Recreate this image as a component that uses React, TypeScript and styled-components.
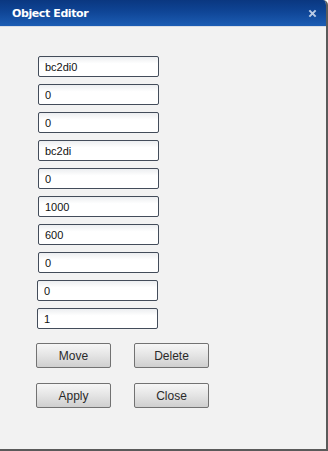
import React from "react";
import styled, { createGlobalStyle } from "styled-components";

const GlobalStyle = createGlobalStyle`
  html, body {
    margin: 0;
    padding: 0;
    background: #ffffff;
  }
  * {
    box-sizing: border-box;
  }
`;

const fields = ["bc2di0", "0", "0", "bc2di", "0", "1000", "600", "0", "0", "1"];

export default function App() {
  return (
    <>
      <GlobalStyle />
      <Window>
        <TitleBar>
          <Title>Object Editor</Title>
          <CloseIcon viewBox="0 0 10 10" aria-hidden>
            <path d="M1.5 1.5 L8.5 8.5 M8.5 1.5 L1.5 8.5" />
          </CloseIcon>
        </TitleBar>
        <Body>
          <FieldList>
            {fields.map((value, i) => (
              <Field key={i} defaultValue={value} $shift={i >= 8 ? -1 : 0} />
            ))}
          </FieldList>
          <ButtonGrid>
            <Button>Move</Button>
            <Button>Delete</Button>
            <Button>Apply</Button>
            <Button>Close</Button>
          </ButtonGrid>
        </Body>
      </Window>
    </>
  );
}

const Window = styled.div`
  width: 328px;
  height: 451px;
  display: flex;
  flex-direction: column;
  background: #f2f2f2;
  border-right: 2px solid #5a5a5a;
  border-bottom: 2px solid #5a5a5a;
  border-top-right-radius: 5px;
  overflow: hidden;
  font-family: "Liberation Sans", Arial, sans-serif;
`;

const TitleBar = styled.div`
  height: 27px;
  display: flex;
  align-items: center;
  justify-content: space-between;
  padding: 1px 9px 0 12px;
  background: linear-gradient(to bottom, #0a3780 0%, #0f4596 45%, #1c5db4 100%);
  border-bottom: 1px solid #d8dde6;
`;

const Title = styled.span`
  color: #ffffff;
  font-family: "DejaVu Sans", Verdana, sans-serif;
  font-weight: bold;
  font-size: 11px;
  letter-spacing: -0.4px;
`;

const CloseIcon = styled.svg`
  width: 9px;
  height: 9px;
  stroke: #b9cbe6;
  stroke-width: 2.2;
  fill: none;
`;

const Body = styled.div`
  flex: 1;
  padding: 29px 0 0 36px;
  display: flex;
  flex-direction: column;
`;

const FieldList = styled.div`
  display: flex;
  flex-direction: column;
  gap: 7px;
  padding-left: 2px;
`;

const Field = styled.input<{ $shift: number }>`
  width: 121px;
  height: 21px;
  margin-left: ${(p) => p.$shift}px;
  padding: 0 0 0 6px;
  border: 1px solid #434c5a;
  border-radius: 2px;
  background: linear-gradient(to bottom, #eceef0 0%, #ffffff 35%, #ffffff 100%);
  color: #111111;
  -webkit-text-fill-color: #111111;
  font-family: "Liberation Sans", Arial, sans-serif;
  font-size: 11px;
  outline: none;
`;

const ButtonGrid = styled.div`
  margin-top: 14px;
  display: grid;
  grid-template-columns: 75px 75px;
  column-gap: 23px;
  row-gap: 15px;
`;

const Button = styled.button`
  height: 25px;
  padding: 0;
  border: 1px solid #727272;
  border-radius: 2px;
  background: linear-gradient(to bottom, #f6f6f6 0%, #e6e6e6 45%, #cfcfcf 100%);
  color: #2a2a2a;
  font-family: "Liberation Sans", Arial, sans-serif;
  font-size: 12px;
  cursor: pointer;
`;
